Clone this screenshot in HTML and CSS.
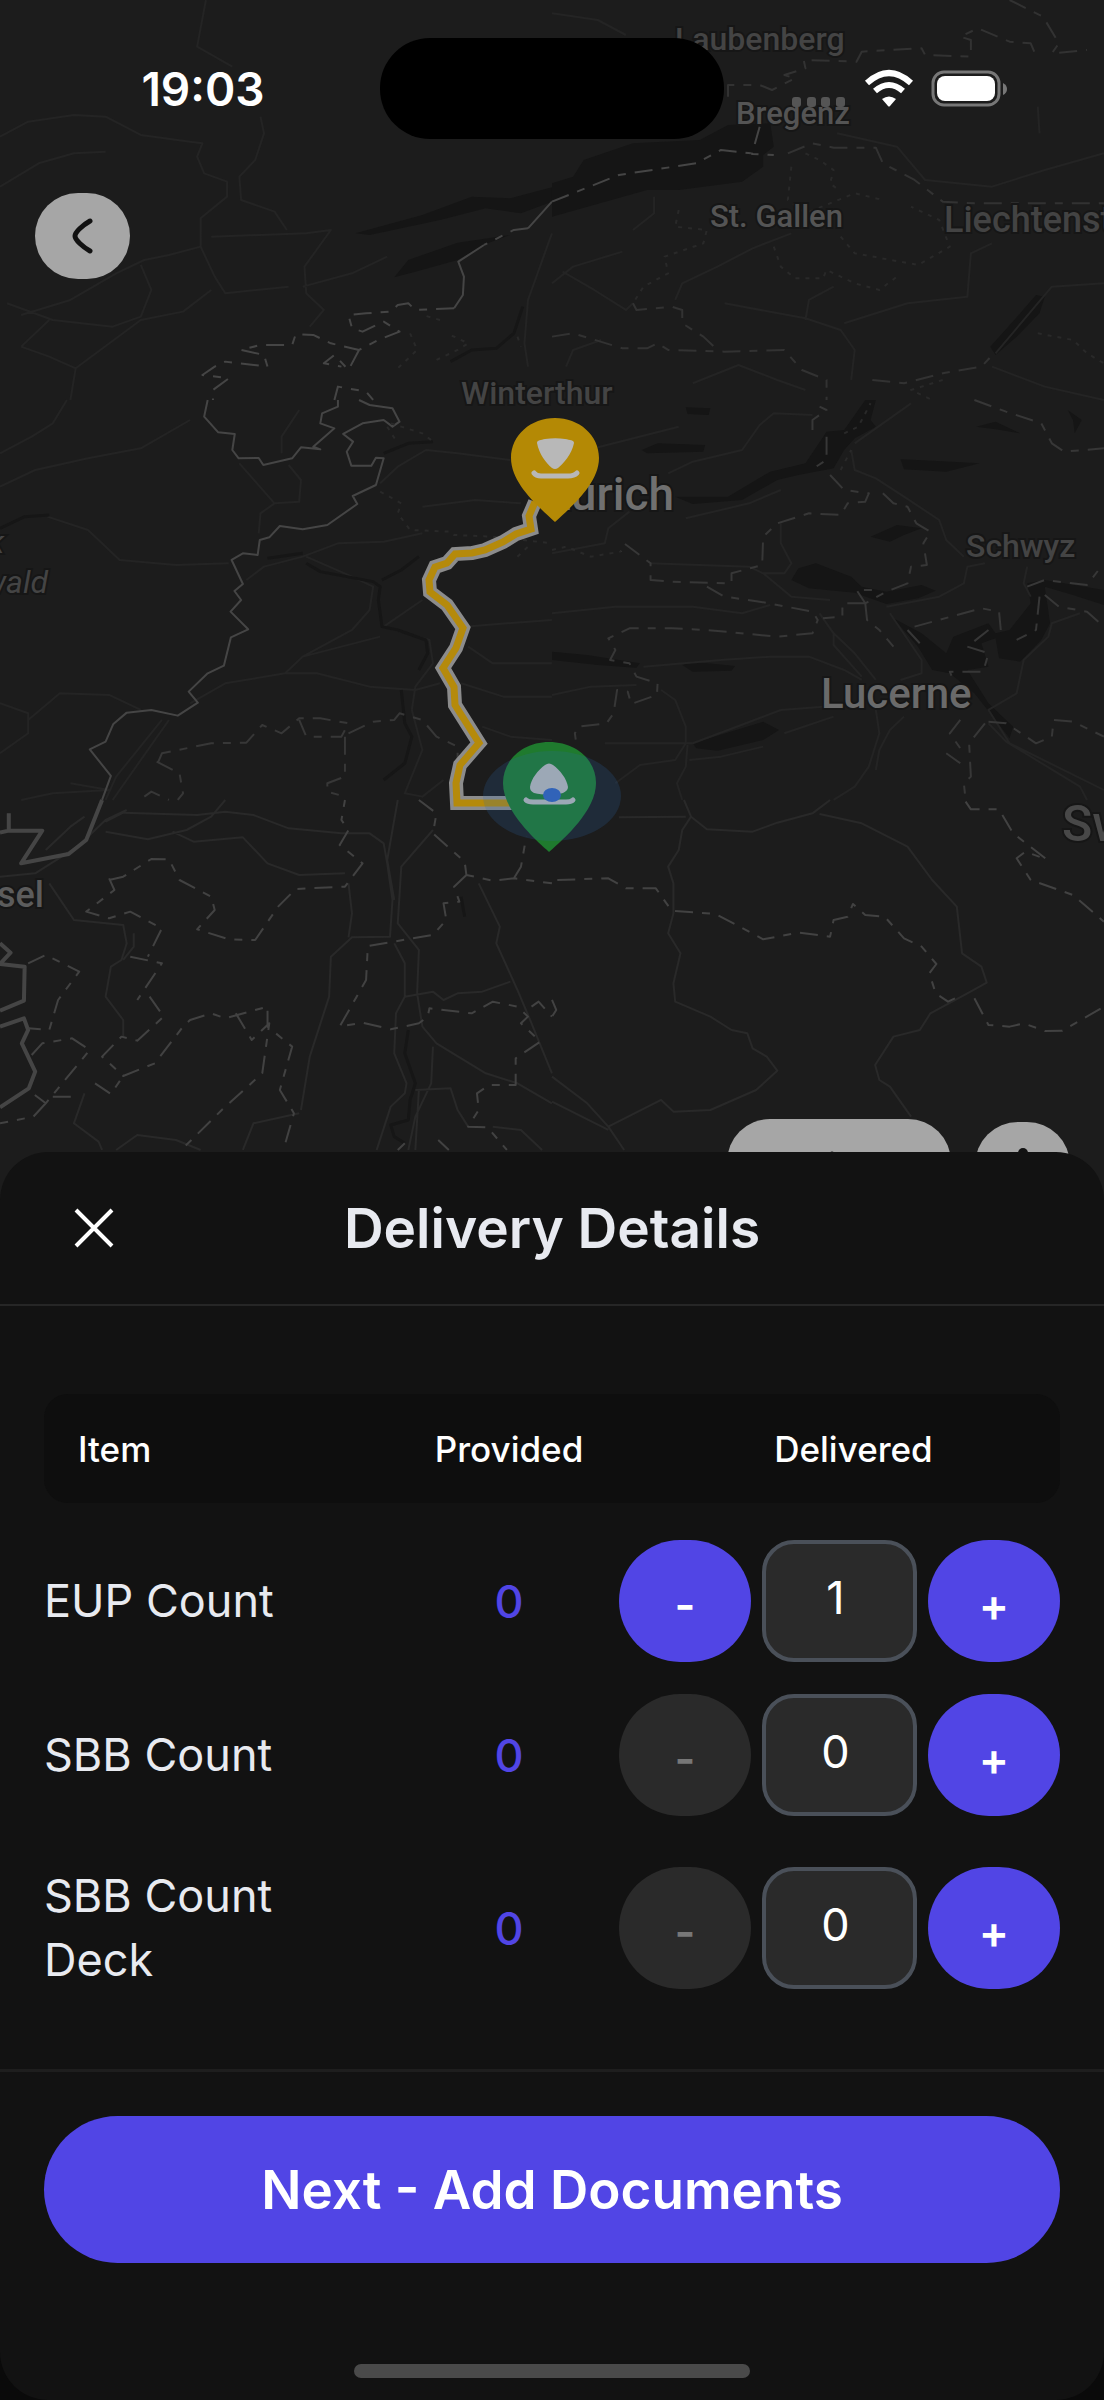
FILE: index.html
```html
<!DOCTYPE html>
<html lang="en">
<head>
  <meta charset="UTF-8" />
  <meta name="viewport" content="width=device-width, initial-scale=1.0" />
  <title>Delivery Details</title>
  <link rel="stylesheet" href="styles.css">
</head>
<body>
  <!-- Map with route -->
  <section class="map">
    <svg class="map-canvas" viewBox="0 0 1104 1200" preserveAspectRatio="xMidYMin slice" role="img" aria-label="Route map">
      <!-- north west -->
      <g class="tile" transform="scale(.352 .3333)">
        <path class="lake" d="M1010 700L1200 645L1340 590L1450 595L1568 562V605L1480 640L1380 625L1250 660L1050 705ZM1120 832L1160 780L1300 728L1450 705L1380 732L1300 780L1180 815Z" />
        <path class="road" d="M0 560L110 490L210 460L300 455M0 410L80 365L210 345L300 350L400 405L540 425L575 430L560 470L580 520L645 545L645 590L570 655L570 740L480 765L410 780L330 820L200 900L60 945M740 350L750 400L725 480L680 530L685 600L780 635L815 690M600 710L870 700L940 690L865 800L870 880L920 930L880 980M20 910L150 960L320 980L400 950L430 870L400 795M570 740L610 830L640 880L820 860M1568 700L1500 900L1490 1030L1500 1100M60 1040L140 960M60 1040L140 1070L215 1105L200 1200M215 1105L400 960L520 935L600 870M860 860L1000 820L1100 770M585 0L560 140L660 200" />
        <path class="river" d="M1485 920L1460 1000L1410 1045L1340 1050L1280 1085" />
        <path class="border" d="M1568 605L1500 685M1375 735L1302 785L1318 830L1315 885L1290 925" />
        <path class="border dash" d="M1500 685L1460 690L1375 735M1290 925L1180 930L1160 910L1130 915L1110 935L1040 940L990 945L1000 985L1030 995L1090 965L1135 995L1075 1020L1020 1050L940 1030L890 1005L840 1003L830 1035L740 1035L685 1050L750 1065L760 1100L640 1085L610 1100L575 1125L650 1135L605 1170L605 1200M1020 1050L990 1110L950 1065L920 1090L970 1100M950 1200L960 1160L1040 1175L1060 1200" />
        <path class="canton fine" d="M1165 1000L1185 1050L1130 1105M1240 1080L1300 1050L1330 1030L1270 1000M1250 960L1200 945M1470 1010L1480 1040" />
      </g>

      <!-- north east -->
      <g class="tile tile-far" transform="translate(552) scale(.352 .3333)">
        <path class="lake" d="M0 550L60 530L90 480L230 430L420 420L500 375L620 370L630 440L600 465L600 500L540 545L360 570L270 570L0 650ZM1375 885L1400 890L1385 940L1320 1010L1260 1065L1245 1040L1330 940Z" />
        <path class="road" d="M0 850L60 800L200 755M30 815L120 870L210 930L230 910M230 690L290 640L290 590M350 900L370 850L470 800L570 745L680 700M720 960L730 900L800 860M490 910L720 955L820 990L860 1050L850 1140M40 1100L60 1050L140 1020M830 970L1010 910L1180 890L1190 760L1250 730M810 400L980 440L1060 540L1250 560L1400 510L1568 460M1568 850L1420 860L1260 1060M400 1150L530 1095L640 1140L720 1170M1380 320L1385 400M1250 1100L1400 1160L1568 1200M0 40L130 60L210 105" />
        <path class="border dash" d="M0 605L190 525L410 490L480 450L565 460M590 380L568 462L630 465" />
        <path class="canton dash" d="M500 290L500 255L590 255L625 270L690 235L660 225L720 205L715 180L865 185L880 155L960 150L1050 145L1060 165L1190 170L1190 120L1160 110L1210 85L1300 125L1360 130L1370 155M1300 0L1395 50L1440 130L1420 160L1520 150M670 460L740 430L800 443L920 443L940 490L1030 540L1110 605L1200 610L1450 610L1568 610M0 1010L60 1000L200 1045L270 1045L300 1030L330 1050L490 1055L660 1050L710 1110L780 1140L780 1200M230 910L240 930L340 920L370 930L370 970L430 1010L470 1050M910 1140L1000 1150L1110 1120L1220 1100L1260 1055" />
        <path class="canton fine" d="M720 460L760 480L800 510L790 550L820 575M680 500L670 600L720 640L860 580L940 600M360 630L350 680L440 690L430 730L320 770L330 820L260 860L230 910M630 740L650 800L690 835L770 835L780 810L860 850L930 870L980 830M820 710L860 760L1040 795L1130 740L1100 660L1020 620M1380 1000L1480 1020L1520 1060L1568 1090M1110 1140L1020 1170L1080 1200" />
      </g>

      <!-- west -->
      <g class="tile" transform="translate(0 400) scale(.352 .3333)">
        <path class="road" d="M0 160L90 110L150 70L190 0M0 260L100 210L250 175L400 145L540 60M135 350L250 390L340 480L500 495L650 490M680 190L780 310L850 305L855 240L820 195M735 400L740 340L780 310M800 160L800 110L850 30M700 540L750 500L860 470L960 430L1090 425L1200 400M870 470L1000 530L1060 560L1050 630L1000 690L860 770L810 820L640 850L540 910M860 770L1080 710M1090 680L1200 600M1090 680L1220 720L1230 790L1180 860L1170 930M810 820L900 820L1050 860L1180 870L1250 850M0 910L80 940L80 1000L0 1060M80 960L170 880L310 885L400 930M480 960L320 1200M460 960L330 1130L300 1200M200 1150L310 1170L150 1180L60 1200M1080 250L1130 200L1210 150L1300 160L1450 180M1200 320L1350 300L1480 310M1330 740L1400 790L1568 790M1320 680L1440 670L1568 660M1310 850L1430 890L1568 890M1370 980L1450 1010L1568 1020M1170 930L1200 1050L1150 1180L1200 1190L1260 1140" />
        <path class="river" d="M0 385L70 350L140 345M760 475L860 460M870 490L910 515L1060 545L1080 560L1075 600L1085 680L1130 690L1210 720L1215 760L1190 810M1085 540L1140 510L1190 470M1090 160L1160 130L1230 125M1140 870L1150 970L1170 1010L1150 1090L1090 1140" />
        <path class="border" d="M590 0L580 50L620 97L667 102L660 150L678 175L735 174L748 195L830 175L855 142L910 148L890 140L950 85L910 70L915 40L960 20L960 0M1020 0L1050 15L1115 25L1135 65L1115 80L1090 60L1030 70L975 102L1003 125L985 155L998 197L1055 197L1068 173L1090 175L1068 255L1002 288L1015 312L930 375L860 388L795 378L765 412L738 420L732 465L690 460L658 480L690 552L666 573L685 600L655 635L705 688L656 712L636 797L590 820L536 875L562 908L505 947L430 930L360 938L322 972L300 1025L255 1048L315 1128L290 1200" />
        <path class="canton dash" d="M450 1085L460 1060L600 1030L700 1028L745 975L800 1000L850 955L910 955L990 970L970 1010L870 1010L850 960M980 1010L980 1130L930 1150L930 1175L980 1190M990 1000L1060 965L1120 960L1135 940L1200 960L1240 1010L1300 1040L1300 1090M445 1085L510 1120L520 1180L505 1200M410 1190L430 1175L480 1200" />
        <path class="canton fine" d="M1080 275L1140 310L1130 340L1165 390L1280 395L1290 405L1400 410L1568 430M1470 470L1510 430M1110 70L1200 100L1225 120M1100 80L1130 130" />
      </g>

      <!-- east -->
      <g class="tile" transform="translate(552 400) scale(.352 .3333)">
        <path class="lake" d="M350 290L500 290L620 215L720 190L780 95L830 90L890 0H920L905 60L920 80L860 115L830 150L800 205L700 225L640 240L540 300L400 312ZM680 540L700 505L750 490L850 530L880 560L950 575L1050 555L1090 572L1040 595L950 612L860 578L730 565ZM380 22L450 25L445 45L385 42ZM255 150L300 130L435 135L430 155L270 160ZM990 178L1080 182L1215 190L1120 215L1000 208ZM905 410L980 375L1050 385L1000 405L960 425ZM1205 80L1260 65L1330 100L1260 88ZM370 795L400 785L520 798L510 812L400 815ZM0 755L100 765L250 790L240 803L130 795L0 780ZM400 1030L600 965L645 990L600 1020L470 1052L410 1045ZM970 655L1050 700L1120 760L1140 710L1240 670L1260 700L1300 690L1360 610L1350 550L1400 540L1568 570V615L1480 585L1400 560L1415 670L1390 720L1330 785L1270 775L1260 715L1220 730L1240 800L1180 810L1240 910L1310 980L1300 1015L1260 960L1200 880L1130 820L1080 810L1040 740ZM1465 30L1505 60L1485 100L1480 60Z" />
        <path class="road" d="M0 180L60 100M330 220L400 185L540 150L590 75L630 40L740 45M100 150L360 80M0 460L150 430L160 385L220 335M0 640L180 620L400 620L540 640L620 615M280 490L560 500L600 520L680 590L790 600M650 370L650 430L680 490L660 520L600 520M650 270L560 310L380 355M850 150L860 210L920 235L1000 290L1100 360L1120 420L1170 470M860 130L1020 10M950 620L1100 590L1170 550L1180 500L1230 490M0 885L110 860L240 855M260 800L480 780L620 770L730 770L830 810L880 840M760 640L800 700L860 760L920 840M800 700L800 735L880 830M310 870L350 900L380 980L380 1030L350 1080L250 1095L180 1150M400 1030L500 990L650 930L770 920M385 1035L380 1100L355 1150L370 1200M660 1000L800 950M150 1030L400 1030M390 1080L480 1070L600 1040M920 930L930 1000L900 1100L860 1160L800 1200M1000 950L960 990L930 1050L920 1110M960 640L1050 780L1050 820L990 840M1350 500L1340 550L1360 590M1500 640L1420 670L1410 710L1340 780L1320 880L1240 930L1300 1030L1568 1170M1240 970L1290 1025L1500 1160L1520 1200" />
        <path class="canton dash" d="M740 90L740 60L780 30L760 20M780 110L780 180L750 200M790 225L830 270L900 280L890 305L840 310L820 345L730 340L640 370L600 410L597 495L510 520L510 550L340 545L280 540L280 490L205 430L195 455M440 560L490 590L590 605L740 635L755 660L740 700L640 710L440 690L340 685L220 685L160 715L180 750L165 780L220 790L240 830L300 850L298 885L225 912L215 875L185 870L175 940L155 970L75 980L65 1000L70 1040M940 280L970 310L1010 320L1035 370L1075 395L1055 430L1065 495L1020 500L1010 550L950 575L890 610L865 570L910 570M890 610L895 660L930 690L970 740M890 610L825 610L825 650L770 655M1030 680L1220 625L1270 635L1275 690M1010 690L1045 730M1240 690L1180 740M1180 740L1240 760L1225 815L1130 815L1140 840M1200 0L1290 35L1390 70L1420 130L1455 155L1568 145M1350 560L1400 540L1520 555L1560 500M1385 590L1375 690L1320 720M1400 585L1440 620L1520 635L1568 680M1160 960L1130 1000L1160 1045M1120 1060L1160 1090M1230 970L1185 1030L1190 1130L1170 1150L1175 1200M1240 965L1290 970L1375 1030L1420 1010L1425 960L1480 965L1568 1010" />
        <path class="canton fine" d="M0 450L40 440L110 470L195 455M830 100L870 80L905 10M820 210L850 150" />
      </g>

      <!-- south west -->
      <g class="tile tile-near" transform="translate(0 800) scale(.352 .3333)">
        <path class="road" d="M300 65L350 38L560 45L640 35L720 45L820 85L970 100L1050 100L1090 130L1100 190L1115 300L1108 410L1000 412L940 470L935 590L880 770L855 930M0 230L100 220L220 140L300 60L360 30M130 150L200 80L240 50M300 95L420 118L530 90L600 50L640 0M490 95L550 125L690 112L760 190L850 225L980 220M140 250L210 360L350 375L360 430L345 480L315 500L300 590L350 660L350 710M380 400L380 440L350 480M1130 0L1115 90L1100 180L1120 300M1230 90L1140 200L1130 370L1190 450L1185 580L1200 680L1240 730L1380 820L1470 850L1568 910M1120 430L1150 490L1150 590L1125 640L1120 760L1155 850L1150 880L1110 920L1070 1050M1150 590L1230 575L1260 600L1300 580L1370 575L1450 545M1230 740L1225 850L1180 950L1160 1050M1190 870L1180 1050M1180 870L1280 865L1300 930L1330 980M1360 250L1420 380L1410 430L1470 570L1510 670L1568 820M990 250L1000 340L990 412M240 880L210 970L280 1025L290 1050M330 1050L390 1005L500 1020L570 1050M690 1050L720 970L850 940M1400 980L1480 990L1540 1050" />
        <path class="river" d="M1160 690L1150 760L1180 850L1165 900L1160 960L1110 975L1120 1010L1150 1030M1310 290L1320 350" />
        <path class="border wide" d="M290 0L245 120L195 162L60 190L120 92L25 92V40M0 98L25 92M0 430L30 458L0 492L70 500L68 602L0 632M0 680L68 655L80 690L62 730L100 815L82 865L0 922" />
        <path class="canton dash" d="M310 235L325 270L245 335L310 355L370 335L460 385L420 470M310 240L350 230L430 177L480 178L510 240L600 290L610 330L560 388L650 418L725 420L790 320L840 267L980 260L1030 190L965 135L990 90L970 60L980 0M370 470L460 490L390 600M425 590L465 650L390 722L345 710L290 770L350 828L440 790L520 680L540 660L600 640L640 655L760 620V680L830 740L795 870L835 940L805 1050M670 640L715 720L765 670L745 820L630 930L515 1050M270 850L315 882L350 828M80 490L130 465L225 515L165 600L140 690L80 685M90 765L120 730L205 715L255 750L130 910L80 870M150 890H205M130 910L95 950L0 970M1190 0L1240 40L1230 100L1320 185L1325 225L1400 242L1460 235L1568 250M1460 235L1480 200L1495 110M1325 225L1290 260L1305 305L1260 310L1268 360L1230 405L1045 438L1040 540L965 680L1030 668L1110 688L1190 670L1215 650L1220 625L1340 640L1400 605L1470 620L1500 650L1480 670L1535 725L1465 775L1465 855L1390 855L1355 880L1360 930L1330 980L1385 982L1440 1050M1130 1050L1150 1030M1245 1020L1275 1050M1510 620L1530 605L1568 650" />
      </g>

      <!-- south east -->
      <g class="tile tile-near" transform="translate(552 800) scale(.352 .3333)">
        <path class="road" d="M375 0L395 50L370 90L360 150L330 200L345 250M395 50L440 88L570 95L640 68L740 40L790 0M190 52L380 50M760 42L880 70L1010 140L1080 240L1150 320L1165 460L1220 500L1235 548L1180 580L1075 640L1045 690L970 710L918 795L930 840L960 860L1020 950M345 250L345 340L330 400L365 460L345 550L350 605L450 650L510 690L555 700L570 745L610 770L640 812L580 870L450 930L345 935L310 900L160 980M0 830L100 910L160 980L205 1050M0 905L160 990" />
        <path class="canton dash" d="M15 240L160 235L210 265L295 265L340 332L465 342L600 418L700 398L790 410L800 360L840 350L855 312L890 345L945 350L1000 415L1050 440L1092 492L1072 520L1090 580L1125 605L1165 585M1200 595L1240 675L1300 680L1340 670L1400 693L1450 692L1568 620M1175 5L1190 28L1270 28L1310 100L1405 178L1345 155L1320 175L1360 240L1480 285L1568 365M0 600L12 630L0 650" />
      </g>

      <g class="labels">
        <text x="675" y="50">Laubenberg</text>
        <text class="label-town" x="736" y="124">Bregenz</text>
        <text class="label-town" x="710" y="227">St. Gallen</text>
        <text class="label-country" x="944" y="232">Liechtenstein</text>
        <text x="461" y="404">Winterthur</text>
        <text class="label-capital" x="674" y="510" text-anchor="end">Zürich</text>
        <text x="966" y="557">Schwyz</text>
        <text class="label-city" x="821" y="708">Lucerne</text>
        <text class="label-nation" x="1062" y="841">Switzerland</text>
        <text class="label-region" x="4" y="553" text-anchor="end">Park</text>
        <text class="label-region" x="48" y="593" text-anchor="end">Schwarzwald</text>
        <text class="label-basel" x="44" y="907" text-anchor="end">Basel</text>
      </g>

      <!-- route -->
      <path class="route-casing" d="M535 502L529 516L531 529L516 534L503 542L485 550L472 553L455 554L447 563L435 567L429 580L430 592L447 605L463 628L456 648L443 668L454 687L455 705L479 743L460 765L456 783L457 803H520" />
      <path class="route-line" d="M535 502L529 516L531 529L516 534L503 542L485 550L472 553L455 554L447 563L435 567L429 580L430 592L447 605L463 628L456 648L443 668L454 687L455 705L479 743L460 765L456 783L457 803H520" />

      <!-- start pin -->
      <path class="pin-start" d="M555 522C540 508 511 484 511 458C511 435 531 418 555 418C579 418 599 435 599 458C599 484 570 508 555 522Z" />
      <path class="pin-glyph" d="M537 443C537 440 541 440 545 439C552 438 559 438 565 439C570 440 574 440 574 443C572 454 563 464 558 468Q555 470 552 468C546 463 539 454 537 443Z" />
      <path class="pin-stroke" d="M534 473Q536 476 541 476H568Q574 476 577 473" />

      <!-- end pin with current location -->
      <path class="pin-end" d="M549 852C533 838 503 810 503 783C503 760 523 742 549 742C576 742 596 760 596 783C596 810 565 838 549 852Z" />
      <path class="pin-glyph" d="M545 765Q549 762 553 765C560 770 567 779 568 787C568 790 566 791 563 793C555 795 543 795 534 793C531 791 530 790 530 787C531 779 538 770 545 765Z" />
      <path class="pin-stroke" d="M526 800Q528 802 533 802H566Q571 802 573 800" />
      <ellipse class="accuracy" cx="552" cy="796" rx="69" ry="45" />
      <ellipse class="location" cx="552" cy="795" rx="9" ry="7" />
    </svg>

    <div class="status-bar">
      <time class="clock">19:03</time>
      <div class="island"></div>
      <svg class="status-icons" viewBox="0 0 216 40" width="216" height="40" aria-hidden="true">
        <g fill="#555">
          <rect x="0" y="28" width="9" height="10" rx="3" />
          <rect x="15" y="28" width="9" height="10" rx="3" />
          <rect x="29" y="28" width="9" height="10" rx="3" />
          <rect x="44" y="28" width="9" height="10" rx="3" />
        </g>
        <g fill="none" stroke="#fff" stroke-width="6">
          <path d="M75 14Q97 -6 119 14" />
          <path d="M83 22Q97 10 111 22" />
        </g>
        <path d="M90 30Q97 25 104 30L98 37Q97 38 96 37Z" fill="#fff" />
        <rect x="141" y="3" width="66" height="33" rx="11" fill="none" stroke="#777" stroke-width="3" />
        <rect x="145" y="7" width="58" height="25" rx="8" fill="#fff" />
        <path d="M211 14Q215 16 215 20T211 26Z" fill="#777" />
      </svg>
    </div>

    <button type="button" class="fab back" aria-label="Back">
      <svg viewBox="0 0 24 36" width="24" height="36"><path d="M19 3C12 7 4 14 4 18S12 29 19 33" /></svg>
    </button>

    <div class="map-actions">
      <button type="button" class="fab pill" aria-label="Navigate">
        <svg viewBox="0 0 24 28" width="24" height="28"><path d="M5 4V24" /></svg>
      </button>
      <button type="button" class="fab" aria-label="My location">
        <svg viewBox="0 0 24 36" width="24" height="36"><circle cx="12" cy="6" r="5" /><path d="M12 14V32" /></svg>
      </button>
    </div>
  </section>

  <!-- Bottom sheet -->
  <main class="sheet">
    <header class="sheet-header">
      <button type="button" class="close" aria-label="Close">
        <svg viewBox="0 0 40 40" width="40" height="40"><path d="M2 2L38 38M38 2L2 38" /></svg>
      </button>
      <h1>Delivery Details</h1>
    </header>

    <form id="deliveryForm">
      <div class="sheet-body">
        <table class="items">
          <thead>
            <tr>
              <th class="col-item" scope="col">Item</th>
              <th class="col-provided" scope="col">Provided</th>
              <th class="col-delivered" scope="col">Delivered</th>
            </tr>
          </thead>
          <tbody>
            <tr>
              <td class="name"><label for="eup">EUP Count</label></td>
              <td class="provided">0</td>
              <td>
                <div class="stepper">
                  <button type="button" aria-label="Decrease">-</button>
                  <input type="text" inputmode="numeric" id="eup" value="1" />
                  <button type="button" aria-label="Increase">+</button>
                </div>
              </td>
            </tr>
            <tr>
              <td class="name"><label for="sbb">SBB Count</label></td>
              <td class="provided">0</td>
              <td>
                <div class="stepper">
                  <button type="button" aria-label="Decrease" disabled>-</button>
                  <input type="text" inputmode="numeric" id="sbb" value="0" />
                  <button type="button" aria-label="Increase">+</button>
                </div>
              </td>
            </tr>
            <tr>
              <td class="name"><label for="sbbDeck">SBB Count Deck</label></td>
              <td class="provided">0</td>
              <td>
                <div class="stepper">
                  <button type="button" aria-label="Decrease" disabled>-</button>
                  <input type="text" inputmode="numeric" id="sbbDeck" value="0" />
                  <button type="button" aria-label="Increase">+</button>
                </div>
              </td>
            </tr>
          </tbody>
        </table>
      </div>

      <div class="sheet-footer">
        <button type="submit" class="next">Next - Add Documents</button>
      </div>
    </form>

    <div class="home-indicator"></div>
  </main>

  <script>
    // Plus and minus buttons
    document.querySelectorAll(".stepper").forEach(function (stepper) {
      const input = stepper.querySelector("input");
      const [minus, plus] = stepper.querySelectorAll("button");

      function change(step) {
        const count = Math.max(0, (parseInt(input.value, 10) || 0) + step);
        input.value = count;
        minus.disabled = count === 0;
      }

      minus.addEventListener("click", function () { change(-1); });
      plus.addEventListener("click", function () { change(1); });
      input.addEventListener("change", function () { change(0); });
    });

    document.getElementById("deliveryForm").addEventListener("submit", function (e) {
      e.preventDefault();
    });
  </script>
</body>
</html>
```

FILE: styles.css
```css
:root {
  --map-color: #1c1c1c;
  --sheet-color: #121212;
  --accent-color: #5145e5;
  --text-color: #e8eaf0;
  --field-color: #2a2a2a;
  --fab-color: #a6a6a6;
}

* {
  box-sizing: border-box;
  margin: 0;
  padding: 0;
  font-family: Inter, "Liberation Sans", sans-serif;
}

body {
  display: flex;
  flex-direction: column;
  min-height: 100vh;
  background-color: #0a0a0a;
  color: var(--text-color);
}

button {
  border: none;
  cursor: pointer;
}

/* Map */
.map {
  position: relative;
  flex: 1;
  min-height: 600px;
  overflow: hidden;
  background-color: var(--map-color);
}

.map-canvas {
  position: absolute;
  inset: 0;
  width: 100%;
  height: 100%;
}

.tile path {
  fill: none;
  vector-effect: non-scaling-stroke;
  stroke-linejoin: round;
}

.tile .lake {
  fill: #151515;
}

.road {
  stroke: #242424;
  stroke-width: 2;
}

.river {
  stroke: #161616;
  stroke-width: 3;
}

.border {
  stroke: #454545;
  stroke-width: 2;
}

.wide {
  stroke-width: 4;
}

.canton {
  stroke: #373737;
  stroke-width: 2;
}

.tile-far .canton {
  stroke: #323232;
}

.tile-near .canton {
  stroke: #424242;
}

.tile-near .road {
  stroke: #292929;
}

.dash {
  stroke-dasharray: 18 9 8 9;
}

.tile .fine {
  stroke: #292929;
  stroke-dasharray: 4 6;
}

.labels text {
  font-family: Roboto, "Liberation Sans", sans-serif;
  font-size: 32px;
  font-weight: 500;
  fill: #444;
  stroke: #161616;
  stroke-width: 4;
  paint-order: stroke;
}

.labels .label-town {
  font-size: 31px;
  fill: #545454;
}

.labels .label-country {
  font-size: 36px;
  fill: #434343;
}

.labels .label-capital {
  font-size: 46px;
  fill: #707070;
}

.labels .label-city {
  font-size: 42px;
  fill: #6a6a6a;
}

.labels .label-nation {
  font-size: 50px;
  fill: #484848;
}

.labels .label-region {
  font-style: italic;
  font-weight: 400;
}

.labels .label-basel {
  font-size: 36px;
  fill: #5c5c5c;
}

.route-casing,
.route-line {
  fill: none;
  stroke: #8c8c8c;
  stroke-width: 14;
}

.route-line {
  stroke: #b58a0b;
  stroke-width: 7;
}

.pin-start {
  fill: #b48905;
}

.pin-end {
  fill: #1f7a2e;
}

.pin-glyph {
  fill: #b8b8b8;
}

.pin-stroke {
  fill: none;
  stroke: #b8b8b8;
  stroke-width: 5;
  stroke-linecap: round;
}

.accuracy {
  fill: #2f69af;
  fill-opacity: 0.2;
}

.location {
  fill: #3163b8;
}

.status-bar {
  position: relative;
  display: grid;
  grid-template-columns: 1fr 344px 1fr;
  align-items: center;
  padding-top: 38px;
}

.clock {
  padding-left: 26px;
  text-align: center;
  font-size: 46px;
  font-weight: 600;
  color: #fff;
}

.island {
  height: 101px;
  border-radius: 50px;
  background-color: #000;
}

.status-icons {
  justify-self: center;
  margin-right: 28px;
}

.fab {
  position: relative;
  width: 95px;
  height: 86px;
  border-radius: 43px;
  background-color: var(--fab-color);
}

.fab svg {
  display: block;
  margin: 0 auto;
  fill: none;
  stroke: #121212;
  stroke-width: 5;
  stroke-linecap: round;
}

.fab circle {
  fill: #121212;
  stroke: none;
}

.back {
  margin: 54px 35px;
}

.map-actions {
  position: absolute;
  right: 34px;
  bottom: -8px;
  display: flex;
  align-items: flex-end;
  gap: 24px;
}

.pill {
  width: 224px;
  height: 89px;
}

/* Bottom sheet */
.sheet {
  position: relative;
  margin-top: -48px;
  border-radius: 48px;
  background-color: var(--sheet-color);
}

.sheet-header {
  display: grid;
  grid-template-columns: 96px 1fr 96px;
  align-items: center;
  height: 154px;
  padding: 0 45px;
  border-bottom: 2px solid #262626;
}

.close {
  height: 96px;
  background: none;
}

.close svg {
  display: block;
  margin-left: 29px;
  stroke: #fff;
  stroke-width: 4;
}

.sheet-header h1 {
  text-align: center;
  font-size: 55px;
  font-weight: 600;
}

.sheet-body {
  padding: 88px 44px 45px;
}

.items {
  width: 100%;
  table-layout: fixed;
  border-spacing: 0;
}

.items th {
  height: 109px;
  background-color: #0e0e0e;
  font-size: 35px;
  font-weight: 500;
  color: #fff;
}

.items .col-item {
  padding-left: 34px;
  border-radius: 24px 0 0 24px;
  text-align: left;
}

.items .col-provided {
  width: 220px;
}

.items .col-delivered {
  width: 441px;
  padding-left: 28px;
  border-radius: 0 24px 24px 0;
}

.items tbody::before {
  content: "";
  display: block;
  height: 21px;
}

.items td {
  padding: 16px 0;
}

.items .name {
  padding: 32px 60px 32px 0;
  font-size: 45px;
  line-height: 64px;
}

.items .provided {
  text-align: center;
  font-size: 45px;
  font-weight: 500;
  color: var(--accent-color);
}

.stepper {
  display: flex;
  gap: 11px;
}

.stepper button {
  width: 132px;
  height: 122px;
  padding-top: 6px;
  border-radius: 61px;
  background-color: var(--accent-color);
  font-size: 45px;
  font-weight: 600;
  color: #fff;
}

.stepper button:disabled {
  background-color: var(--field-color);
  color: #777;
  cursor: default;
}

.stepper input {
  flex: 1;
  width: 100%;
  min-width: 0;
  padding: 0 8px 8px 0;
  border: 4px solid #4a5059;
  border-radius: 32px;
  background-color: var(--field-color);
  text-align: center;
  font-size: 45px;
  color: #fff;
}

.stepper input:focus {
  outline: none;
  border-color: var(--accent-color);
}

.sheet-footer {
  padding: 44px 44px 0;
  border-top: 3px solid #1e1e1e;
}

.next {
  display: block;
  width: 100%;
  height: 147px;
  border-radius: 74px;
  background-color: var(--accent-color);
  font-size: 53px;
  font-weight: 600;
  color: #fff;
}

.home-indicator {
  width: 396px;
  height: 14px;
  margin: 0 auto;
  border-radius: 7px;
  background-color: #4a4a4a;
}

.sheet form {
  padding-bottom: 101px;
}

.sheet::after {
  content: "";
  display: block;
  height: 22px;
}
```
